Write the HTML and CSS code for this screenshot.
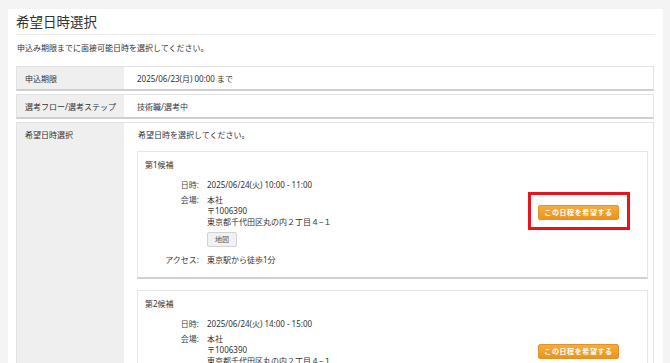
FILE: index.html
```html
<!DOCTYPE html>
<html lang="ja">
 <head>
  <meta charset="utf-8">
  <title>希望日時選択</title>
  <link rel="stylesheet" href="styles.css">
 </head>
 <body>
  <div class="panel">
   <h1 class="panel-title">希望日時選択</h1>
   <p class="lead">申込み期限までに面接可能日時を選択してください。</p>

   <div class="row">
    <div class="row-label">申込期限</div>
    <div class="row-value">2025/06/23(月) 00:00 まで</div>
   </div>
   <div class="row">
    <div class="row-label">選考フロー/選考ステップ</div>
    <div class="row-value">技術職/選考中</div>
   </div>
   <div class="row">
    <div class="row-label">希望日時選択</div>
    <div class="row-value">
     <p class="hint">希望日時を選択してください。</p>

     <div class="cand">
      <div class="cand-info">
       <div class="cand-title">第1候補</div>
       <div class="cand-list">
        <div class="cand-key">日時:</div>
        <div>2025/06/24(火) 10:00 - 11:00</div>
        <div class="cand-key">会場:</div>
        <div>本社<br>〒1006390<br>東京都千代田区丸の内２丁目４−１<br><span class="map-btn">地図</span></div>
        <div class="cand-key">アクセス:</div>
        <div>東京駅から徒歩1分</div>
       </div>
      </div>
      <div class="cand-action">
       <span class="pick-btn">この日程を希望する</span>
       <span class="mark"></span>
      </div>
     </div>

     <div class="cand">
      <div class="cand-info">
       <div class="cand-title">第2候補</div>
       <div class="cand-list">
        <div class="cand-key">日時:</div>
        <div>2025/06/24(火) 14:00 - 15:00</div>
        <div class="cand-key">会場:</div>
        <div>本社<br>〒1006390<br>東京都千代田区丸の内２丁目４−１<br><span class="map-btn">地図</span></div>
        <div class="cand-key">アクセス:</div>
        <div>東京駅から徒歩1分</div>
       </div>
      </div>
      <div class="cand-action">
       <span class="pick-btn">この日程を希望する</span>
      </div>
     </div>
    </div>
   </div>
  </div>
 </body>
</html>
```

FILE: styles.css
```css
body { margin: 9px 7px 0 8px; background: #f4f4f4; color: #333;
       font-family: "Noto Sans", "Noto Sans CJK JP", sans-serif; font-size: 8px; line-height: 11px; }
p { margin: 0; }

.panel { background: #fff; padding: 4px 8px 40px; }
.panel-title { margin: 0; font-size: 13.5px; line-height: 18px; font-weight: normal; color: #333;
               padding-bottom: 3px; border-bottom: 1px solid #ebebeb; }
.lead { margin: 7px 0 13px; padding-left: 1px; }

.row { display: flex; border: 1px solid #e2e2e2; border-bottom: 2px solid #cfcfcf; margin-bottom: 3px; margin-right: 1px; }
.row-label { width: 99px; flex: none; background: #efefef; padding: 6px 0 5px 8px; }
.row-value { flex: 1; padding: 6px 5px 5px 13px; }
.hint { padding-left: 1px; margin-bottom: 11px; }

.cand { display: flex; border: 1px solid #e6e6e6; border-bottom: 2px solid #d0d0d0;
        padding: 7px 28px 12px 7px; margin-bottom: 11px; }
.cand-info { flex: 1; }
.cand-title { margin-bottom: 9px; }
.cand-list { display: grid; grid-template-columns: 54px 1fr; column-gap: 8px; row-gap: 4px; }
.cand-key { text-align: right; color: #444; }
.map-btn { display: inline-block; margin: 5px 0 3px; width: 28px; height: 13px; line-height: 13px;
           text-align: center; font-size: 7px; color: #555; background: #f1f1f1;
           border: 1px solid #d2d2d2; border-radius: 2px; }

.cand-action { position: relative; align-self: center; }
.pick-btn { display: block; width: 79px; height: 13px; line-height: 13px; text-align: center;
            font-size: 7px; font-weight: bold; letter-spacing: 0.6px; color: #fff;
            background: linear-gradient(#f5ad3c, #ea9420); border: 1px solid #e49323; border-radius: 2px; }
.mark { position: absolute; top: -13px; left: -10px; right: -11px; bottom: -10px; border: 3px solid #e8141e; }
```
